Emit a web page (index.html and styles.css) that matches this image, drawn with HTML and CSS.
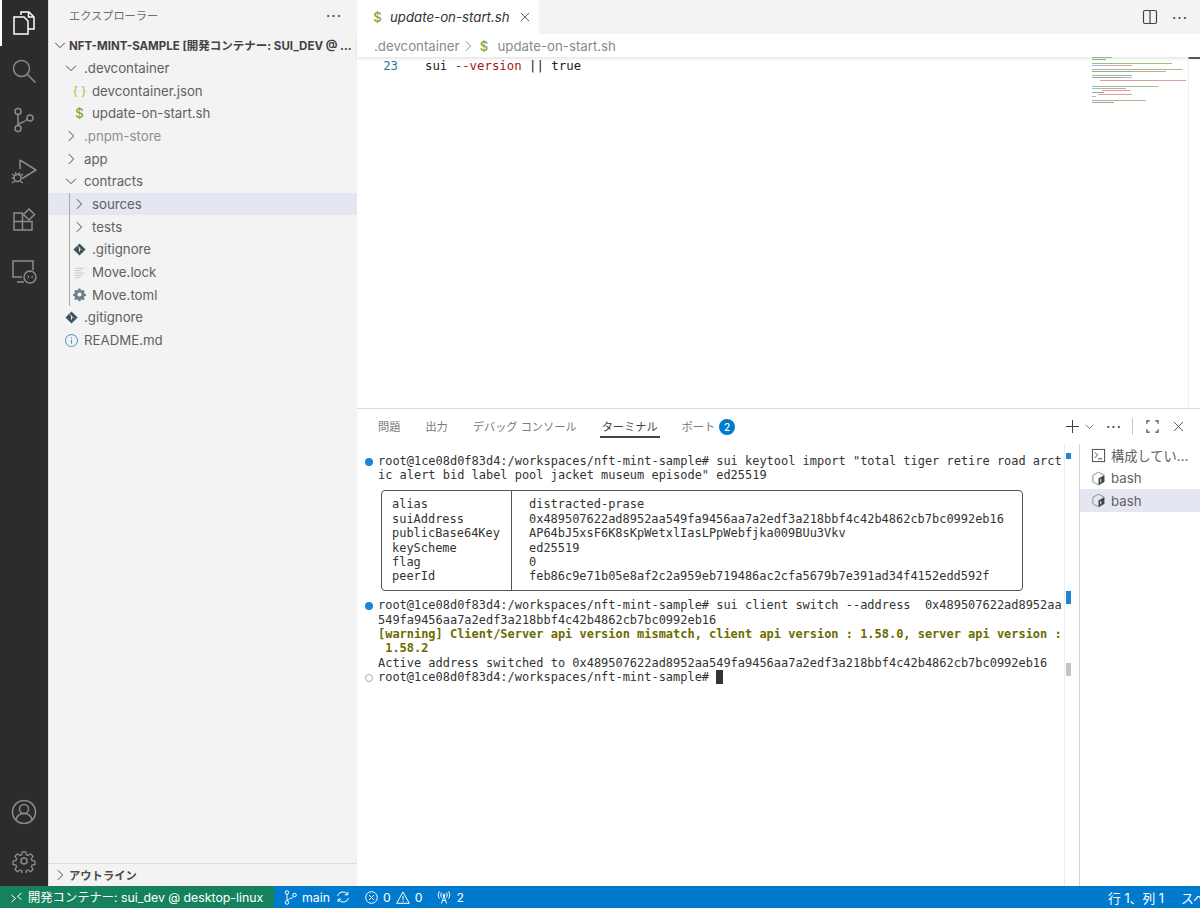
FILE: index.html
```html
<!DOCTYPE html>
<html lang="ja">
<head>
    <meta charset="UTF-8">
    <title>update-on-start.sh - nft-mint-sample</title>
    <link rel="stylesheet" href="styles.css">
</head>
<body>
    <svg class="sprite" width="0" height="0">
        <symbol id="chev-r" viewBox="0 0 16 16"><path d="M5.5 2.5 11 8l-5.5 5.5" fill="none" stroke="currentColor" stroke-width="1.1"/></symbol>
        <symbol id="chev-d" viewBox="0 0 16 16"><path d="M2.5 5.5 8 11l5.5-5.5" fill="none" stroke="currentColor" stroke-width="1.1"/></symbol>
        <symbol id="git-file" viewBox="0 0 16 16"><path d="M8 1.5 14.5 8 8 14.5 1.5 8z" fill="#41535b"/><path d="M6.3 4.6 8 6.3v4M8 6.6l2.2 2.2" fill="none" stroke="#f3f3f3" stroke-width="1"/></symbol>
        <symbol id="bash" viewBox="0 0 16 16"><path d="M8 1.2 14 4.5v7L8 14.8 2 11.5v-7z" fill="none" stroke="#7f8a90" stroke-width="1"/><path d="M8 8l6-3.5v7L8 14.8z" fill="#3d4448"/><path d="M10.4 8.5v3.5" stroke="#fff" stroke-width="1"/></symbol>
    </svg>

    <div class="workbench">
        <nav class="activity-bar">
            <div class="activity-top">
                <div class="activity-item active">
                    <svg width="24" height="26" viewBox="0 0 24 26" fill="none" stroke="#fff" stroke-width="1.5"><path d="M9 5V2h8l5 5v12h-6"/><path d="M2 7h10l4 4v13H2z"/><path d="M16.5 2v5h5"/></svg>
                </div>
                <div class="activity-item">
                    <svg width="26" height="26" viewBox="0 0 26 26" fill="none" stroke="#8c8c8c" stroke-width="1.5"><circle cx="10.5" cy="10.5" r="8"/><path d="m16 16 8.5 8.500"/></svg>
                </div>
                <div class="activity-item">
                    <svg width="22" height="26" viewBox="0 0 22 26" fill="none" stroke="#8c8c8c" stroke-width="1.5"><circle cx="5" cy="4.5" r="3"/><circle cx="5" cy="21.5" r="3"/><circle cx="17" cy="11" r="3"/><path d="M5 7.5v11M14 12c-2 4-6 2.5-9 6"/></svg>
                </div>
                <div class="activity-item item-debug">
                    <svg width="26" height="28" viewBox="0 0 26 28" fill="none" stroke="#8c8c8c" stroke-width="1.5"><path d="M9 2v9M9 2l16 10-13 8"/><circle cx="6.5" cy="20" r="3.5"/><path d="M1 16l3 2M1 20h2M1 25l3-2M12 16l-3 2M12 20h-2M12 25l-3-2M4 14.5l1.5 2M9 14.5l-1.5 2"/></svg>
                </div>
                <div class="activity-item">
                    <svg width="24" height="24" viewBox="0 0 24 24" fill="none" stroke="#8c8c8c" stroke-width="1.5"><path d="M2 5h8.5v8.5H2zM2 13.5h8.5V22H2zM10.5 13.5H20V22h-9.5z"/><path d="m17 1 5.500 5.500-5.500 5.500-5.500-5.500z"/></svg>
                </div>
                <div class="activity-item item-remote">
                    <svg width="26" height="26" viewBox="0 0 26 26" fill="none" stroke="#8c8c8c" stroke-width="1.5"><path d="M11 18H2V2h20v9"/><path d="M6 23h7"/><circle cx="19" cy="18" r="6" fill="#2c2c2c"/><path d="m16.5 16.5 1.5 1.5-1.5 1.5M22 16.5 20.5 18l1.5 1.5" stroke-width="1"/></svg>
                </div>
            </div>
            <div class="activity-bottom">
                <div class="activity-item">
                    <svg width="26" height="26" viewBox="0 0 26 26" fill="none" stroke="#8c8c8c" stroke-width="1.5"><circle cx="13" cy="13" r="11.5"/><circle cx="13" cy="10" r="4.5"/><path d="M5 21c1-5 4-6.5 8-6.5s7 1.5 8 6.5"/></svg>
                </div>
                <div class="activity-item">
                    <svg width="24" height="24" viewBox="0 0 24 24" fill="none" stroke="#8c8c8c" stroke-width="1.5"><circle cx="12" cy="12" r="3"/><path d="M10 1.5h4l.7 3.3 2 .9 2.900-1.900 2.700 2.800-1.900 2.800.9 2.100 3.200.6v3.800l-3.200.7-.9 2 1.900 2.900-2.700 2.700-2.900-1.900-2 .9-.7 3.300h-4l-.7-3.300-2-.9-2.900 1.900-2.700-2.700 1.900-2.900-.9-2-3.200-.7v-3.800l3.200-.6.9-2.100-1.900-2.800 2.700-2.800 2.900 1.900 2-.9z" transform="translate(1.5 1.5) scale(.875)"/></svg>
                </div>
            </div>
        </nav>

        <aside class="sidebar">
            <div class="sidebar-title">
                <span>エクスプローラー</span>
                <span class="dots">···</span>
            </div>
            <div class="tree">
                <div class="tree-root">
                    <svg class="chev"><use href="#chev-d"/></svg>
                    <span class="root-name">NFT-MINT-SAMPLE [開発コンテナー: SUI_DEV @ ...</span>
                </div>
                <div class="row d1"><svg class="chev"><use href="#chev-d"/></svg>.devcontainer</div>
                <div class="row d2"><span class="file-icon json">{ }</span>devcontainer.json</div>
                <div class="row d2"><span class="file-icon shell">$</span>update-on-start.sh</div>
                <div class="row d1 muted"><svg class="chev"><use href="#chev-r"/></svg>.pnpm-store</div>
                <div class="row d1"><svg class="chev"><use href="#chev-r"/></svg>app</div>
                <div class="row d1"><svg class="chev"><use href="#chev-d"/></svg>contracts</div>
                <div class="tree-group">
                    <div class="indent-guide"></div>
                    <div class="row d2 selected"><svg class="chev"><use href="#chev-r"/></svg>sources</div>
                    <div class="row d2"><svg class="chev"><use href="#chev-r"/></svg>tests</div>
                    <div class="row d2"><svg class="file-svg"><use href="#git-file"/></svg>.gitignore</div>
                    <div class="row d2">
                        <svg class="file-svg" viewBox="0 0 16 16" fill="none" stroke="#c4c4c4" stroke-width="1"><path d="M3 3.5h10M3 6h7M3 8.5h10M3 11h8M3 13.5h5"/></svg>Move.lock
                    </div>
                    <div class="row d2">
                        <svg class="file-svg" viewBox="0 0 16 16"><path d="M6.8 1.5h2.4l.4 1.8 1.3.6 1.6-1 1.7 1.7-1 1.6.6 1.3 1.8.4v2.4l-1.800.4-.6 1.300 1 1.600-1.700 1.700-1.600-1-1.300.6-.4 1.800H6.800l-.4-1.800-1.300-.6-1.600 1-1.700-1.700 1-1.600-.6-1.300-1.800-.4V7.900l1.800-.4.6-1.300-1-1.600 1.700-1.700 1.600 1 1.300-.6z" transform="translate(.8 .3) scale(.9)" fill="#6d8086"/><circle cx="8" cy="8" r="2.2" fill="#f3f3f3"/></svg>Move.toml
                    </div>
                </div>
                <div class="row d1"><svg class="file-svg"><use href="#git-file"/></svg>.gitignore</div>
                <div class="row d1">
                    <svg class="file-svg" viewBox="0 0 16 16" fill="none" stroke="#519aba" stroke-width="1.1"><circle cx="8" cy="8" r="6.4"/><path d="M8 7v4.5M8 4.3v1.4"/></svg>README.md
                </div>
            </div>
            <div class="outline">
                <svg class="chev"><use href="#chev-r"/></svg>
                <span>アウトライン</span>
            </div>
        </aside>

        <main class="main">
            <div class="tab-bar">
                <div class="tab">
                    <span class="file-icon shell">$</span>
                    <span class="tab-name">update-on-start.sh</span>
                    <svg class="tab-close" viewBox="0 0 16 16" fill="none" stroke="#424242" stroke-width="1.1"><path d="m2.5 2.5 11 11M13.5 2.5l-11 11"/></svg>
                </div>
                <div class="tab-actions">
                    <svg width="16" height="16" viewBox="0 0 16 16" fill="none" stroke="#424242" stroke-width="1.2"><rect x="1.5" y="1.5" width="13" height="13" rx="1.5"/><path d="M8 1.5v13"/></svg>
                    <span class="dots">···</span>
                </div>
            </div>
            <div class="breadcrumb">
                <span>.devcontainer</span>
                <svg class="crumb-sep"><use href="#chev-r"/></svg>
                <span class="file-icon shell">$</span>
                <span>update-on-start.sh</span>
            </div>
            <div class="editor">
                <div class="code">
                    <span class="line-no">23</span>
                    <span class="line-text">sui <span class="tok-flag">--version</span> || true</span>
                </div>
                <svg class="minimap" width="96" height="48" viewBox="0 0 96 48">
                    <g class="mini-green"><rect x="0" y="0" width="20" height="1"/><rect x="0" y="6" width="80" height="1"/><rect x="0" y="12" width="90" height="1"/><rect x="0" y="18" width="40" height="1"/><rect x="0" y="29" width="66" height="1"/><rect x="0" y="43" width="54" height="1"/></g>
                    <g class="mini-dark"><rect x="0" y="2" width="14" height="1"/><rect x="0" y="14" width="40" height="1"/><rect x="0" y="20" width="30" height="1"/><rect x="0" y="35" width="12" height="1"/><rect x="0" y="45" width="22" height="1"/></g>
                    <g class="mini-red"><rect x="14" y="8" width="26" height="1"/><rect x="40" y="14" width="34" height="1"/><rect x="8" y="23" width="86" height="1"/><rect x="8" y="31" width="26" height="1"/><rect x="10" y="33" width="28" height="1"/><rect x="6" y="37" width="34" height="1"/></g>
                    <g class="mini-blue"><rect x="0" y="8" width="14" height="1"/><rect x="30" y="20" width="10" height="1"/><rect x="0" y="31" width="8" height="1"/><rect x="0" y="39" width="4" height="1"/></g>
                </svg>
                <div class="editor-scroll"></div>
            </div>
            <section class="panel">
                <div class="panel-head">
                    <div class="panel-tabs">
                        <span>問題</span>
                        <span>出力</span>
                        <span>デバッグ コンソール</span>
                        <span class="current">ターミナル</span>
                        <span class="with-badge">ポート<b class="badge">2</b></span>
                    </div>
                    <div class="panel-actions">
                        <svg class="act-plus" viewBox="0 0 16 16" fill="none" stroke="#424242" stroke-width="1.1"><path d="M8 1v14M1 8h14"/></svg>
                        <svg class="act-caret"><use href="#chev-d"/></svg>
                        <span class="dots">···</span>
                        <span class="act-sep"></span>
                        <svg class="act-icon" viewBox="0 0 14 14" fill="none" stroke="#424242" stroke-width="1.2"><path d="M1 4V1h3M10 1h3v3M13 10v3h-3M4 13H1v-3"/></svg>
                        <svg class="act-icon" viewBox="0 0 16 16" fill="none" stroke="#424242" stroke-width="1.1"><path d="m2.5 2.5 11 11M13.5 2.5l-11 11"/></svg>
                    </div>
                </div>
                <div class="panel-body">
                    <div class="terminal">
                        <div class="term-line"><i class="mark ok"></i>root@1ce08d0f83d4:/workspaces/nft-mint-sample# sui keytool import "total tiger retire road arct</div>
                        <div class="term-line">ic alert bid label pool jacket museum episode" ed25519</div>
                        <div class="term-table">
                            <div class="term-keys">
                                <div class="term-line">alias</div>
                                <div class="term-line">suiAddress</div>
                                <div class="term-line">publicBase64Key</div>
                                <div class="term-line">keyScheme</div>
                                <div class="term-line">flag</div>
                                <div class="term-line">peerId</div>
                            </div>
                            <div class="term-values">
                                <div class="term-line">distracted-prase</div>
                                <div class="term-line">0x489507622ad8952aa549fa9456aa7a2edf3a218bbf4c42b4862cb7bc0992eb16</div>
                                <div class="term-line">AP64bJ5xsF6K8sKpWetxlIasLPpWebfjka009BUu3Vkv</div>
                                <div class="term-line">ed25519</div>
                                <div class="term-line">0</div>
                                <div class="term-line">feb86c9e71b05e8af2c2a959eb719486ac2cfa5679b7e391ad34f4152edd592f</div>
                            </div>
                        </div>
                        <div class="term-line"><i class="mark ok"></i>root@1ce08d0f83d4:/workspaces/nft-mint-sample# sui client switch --address  0x489507622ad8952aa</div>
                        <div class="term-line">549fa9456aa7a2edf3a218bbf4c42b4862cb7bc0992eb16</div>
                        <div class="term-line warn">[warning] Client/Server api version mismatch, client api version : 1.58.0, server api version :</div>
                        <div class="term-line warn"> 1.58.2</div>
                        <div class="term-line">Active address switched to 0x489507622ad8952aa549fa9456aa7a2edf3a218bbf4c42b4862cb7bc0992eb16</div>
                        <div class="term-line"><i class="mark idle"></i>root@1ce08d0f83d4:/workspaces/nft-mint-sample# <i class="cursor"></i></div>
                    </div>
                    <div class="term-ruler">
                        <i class="rule-a"></i>
                        <i class="rule-b"></i>
                        <i class="rule-c"></i>
                    </div>
                    <div class="term-list">
                        <div class="term-item">
                            <svg class="file-svg" viewBox="0 0 16 16" fill="none" stroke="#424242" stroke-width="1"><rect x="1.5" y="1.5" width="13" height="13"/><path d="m4 4.5 3 3-3 3M7.5 11.5H12"/></svg>
                            <span>構成してい...</span>
                        </div>
                        <div class="term-item"><svg class="file-svg"><use href="#bash"/></svg><span>bash</span></div>
                        <div class="term-item selected"><svg class="file-svg"><use href="#bash"/></svg><span>bash</span></div>
                    </div>
                </div>
            </section>
        </main>
    </div>

    <footer class="status-bar">
        <div class="status-remote">
            <svg width="11" height="11" viewBox="0 0 11 11" fill="none" stroke="#fff" stroke-width="1"><path d="m.5 3 4 3.5-4 3.500M10.500 1l-4 3.500 4 3"/></svg>
            <span>開発コンテナー: sui_dev @ desktop-linux</span>
        </div>
        <div class="status-left">
            <span class="status-item">
                <svg width="13" height="15" viewBox="0 0 13 15" fill="none" stroke="#fff" stroke-width="1"><circle cx="3" cy="2.5" r="1.8"/><circle cx="3" cy="12.5" r="1.8"/><circle cx="10.5" cy="5" r="1.8"/><path d="M3 4.3v6.4M9.5 6.5C8.5 9 4.5 8 3 10.7"/></svg>
                main
                <svg class="sync" width="14" height="14" viewBox="0 0 14 14" fill="none" stroke="#fff" stroke-width="1"><path d="M1.5 6A5.5 5.5 0 0 1 11.5 4.5M12.5 8A5.5 5.5 0 0 1 2.5 9.5"/><path d="M11.8 1.8v3h-3M2.2 12.2v-3h3"/></svg>
            </span>
            <span class="status-item problems">
                <svg width="13" height="13" viewBox="0 0 13 13" fill="none" stroke="#fff" stroke-width="1"><circle cx="6.5" cy="6.5" r="5.8"/><path d="m4 4 5 5M9 4 4 9"/></svg>
                0
                <svg class="warn-icon" width="14" height="13" viewBox="0 0 14 13" fill="none" stroke="#fff" stroke-width="1"><path d="M7 1 13.3 12.3H.7z"/><path d="M7 5v4M7 10v1.2"/></svg>
                0
            </span>
            <span class="status-item">
                <svg width="14" height="13" viewBox="0 0 14 13" fill="none" stroke="#fff" stroke-width="1"><path d="M7 4.5 4.5 12.5M7 4.5l2.5 8M5.3 9.5h3.4"/><circle cx="7" cy="4" r="1"/><path d="M4.5 1.5C3.5 3 3.5 5 4.5 6.5M9.5 1.5c1 1.5 1 3.5 0 5M2.5.5C.8 2.5.8 5.5 2.5 7.5M11.5.5c1.700 2 1.700 5 0 7"/></svg>
                2
            </span>
        </div>
        <div class="status-right">
            <span>行 1、列 1</span>
            <span>スペ</span>
        </div>
    </footer>
</body>
</html>
```

FILE: styles.css
```css
* {
    box-sizing: border-box;
}
html, body {
    height: 100%;
}
body {
    margin: 0;
    overflow: hidden;
    font-family: Inter, "Noto Sans CJK JP", sans-serif;
    font-size: 13.25px;
    color: #616161;
    background-color: #fff;
}
.sprite {
    display: block;
    height: 0;
}
.workbench {
    display: flex;
    height: 886px;
}

/* activity bar */
.activity-bar {
    width: 49px;
    flex: none;
    display: flex;
    flex-direction: column;
    justify-content: space-between;
    background-color: #2c2c2c;
    border-right: 1px solid #d8d8d8;
}
.activity-item {
    height: 49.6px;
    display: flex;
    align-items: center;
    justify-content: center;
    padding-right: 1px;
}
.activity-item.active {
    border-left: 2px solid #fff;
    padding-right: 3px;
    height: 46px;
}
.item-debug {
    padding-top: 5px;
}
.item-remote {
    padding-top: 5px;
}

/* explorer */
.sidebar {
    width: 308px;
    flex: none;
    display: flex;
    flex-direction: column;
    background-color: #f3f3f3;
}
.sidebar-title {
    height: 33px;
    flex: none;
    display: flex;
    align-items: center;
    justify-content: space-between;
    padding: 0 15px 3px 20px;
    font-size: 11.2px;
    color: #6f6f6f;
}
.dots {
    font-size: 15px;
    font-weight: 400;
    letter-spacing: 1px;
    color: #424242;
}
.tree {
    flex: 1;
    min-height: 0;
}
.tree-root {
    height: 23.5px;
    display: flex;
    align-items: center;
    padding-left: 4px;
    font-size: 11.5px;
    font-weight: 700;
    color: #424242;
}
.root-name {
    margin-left: 2px;
    white-space: nowrap;
}
.tree-root .chev {
    margin-right: 0;
}
.row {
    height: 22.7px;
    display: flex;
    align-items: center;
    white-space: nowrap;
}
.row.d1 {
    padding-left: 15px;
}
.row.d2 {
    padding-left: 23px;
}
.row.muted {
    color: #8e8e8e;
}
.row.selected,
.term-item.selected {
    background-color: #e4e6f1;
}
.chev {
    width: 14px;
    height: 14px;
    flex: none;
    color: #424242;
    margin-right: 6px;
}
.row .file-icon,
.row .file-svg {
    margin-right: 5px;
}
.file-icon {
    width: 15px;
    flex: none;
    text-align: center;
    font-weight: 500;
}
.file-icon.json {
    font-size: 12px;
    font-weight: 400;
    color: #b7b73b;
}
.file-icon.shell {
    color: #7fa832;
}
.file-svg {
    width: 15px;
    height: 15px;
    flex: none;
}
.tree-group {
    position: relative;
}
.indent-guide {
    position: absolute;
    left: 20px;
    top: 0;
    bottom: 0;
    width: 1px;
    background-color: #a9a9a9;
    z-index: 1;
}
.outline {
    height: 23px;
    flex: none;
    display: flex;
    align-items: center;
    padding-left: 4px;
    border-top: 1px solid #dcdcdc;
    font-size: 11.3px;
    font-weight: 700;
    color: #4d4d4d;
}
.outline .chev {
    margin-right: 2px;
}

/* editor */
.main {
    flex: 1;
    min-width: 0;
    display: flex;
    flex-direction: column;
}
.tab-bar {
    height: 34px;
    flex: none;
    display: flex;
    justify-content: space-between;
    background-color: #f3f3f3;
}
.tab {
    width: 182px;
    display: flex;
    align-items: center;
    padding-left: 13px;
    background-color: #fff;
    color: #333;
}
.tab .file-icon {
    margin-right: 5px;
}
.tab-name {
    font-style: italic;
}
.tab-close {
    width: 12px;
    height: 12px;
    margin-left: 9px;
}
.tab-actions {
    display: flex;
    align-items: center;
    gap: 14px;
    padding-right: 12px;
}
.breadcrumb {
    height: 23px;
    flex: none;
    display: flex;
    align-items: center;
    padding-left: 17px;
    color: #8a8a8a;
    box-shadow: 0 2px 3px rgba(0, 0, 0, 0.1);
    position: relative;
}
.breadcrumb .file-icon {
    margin-right: 6px;
}
.crumb-sep {
    width: 14px;
    height: 14px;
    color: #8a8a8a;
    margin: 0 2px 0 1px;
}
.editor {
    flex: 1;
    min-height: 0;
    display: flex;
    font-family: "DejaVu Sans Mono", monospace;
    font-size: 12.35px;
    color: #222;
}
.code {
    flex: 1;
    display: flex;
    height: 18px;
    line-height: 18px;
}
.line-no {
    width: 41px;
    flex: none;
    text-align: right;
    color: #237893;
}
.line-text {
    margin-left: 27px;
    white-space: pre;
}
.tok-flag {
    color: #a31515;
}
.minimap {
    flex: none;
    opacity: 0.8;
}
.mini-green {
    fill: #7cb36a;
}
.mini-dark {
    fill: #8a8a8a;
}
.mini-red {
    fill: #cf8a86;
}
.mini-blue {
    fill: #8fa6d6;
}
.editor-scroll {
    width: 12px;
    flex: none;
    border-left: 1px solid #efefef;
    border-top: 2px solid #555;
    height: 100%;
    position: relative;
    z-index: 1;
}

/* panel */
.panel {
    height: 478px;
    flex: none;
    display: flex;
    flex-direction: column;
    border-top: 1px solid #dcdcdc;
}
.panel-head {
    height: 35px;
    flex: none;
    display: flex;
    justify-content: space-between;
    align-items: center;
}
.panel-tabs {
    display: flex;
    align-items: center;
    gap: 25px;
    padding-left: 21px;
    font-size: 11.2px;
    color: #7a7a7a;
}
.panel-tabs span {
    height: 21px;
    line-height: 20px;
    padding-top: 1px;
}
.panel-tabs .current {
    color: #424242;
    border-bottom: 1px solid #424242;
    box-shadow: 0 1px 0 #424242;
    margin: 0 -3px 0 -2px;
    padding: 1px 2px 0;
}
.with-badge {
    display: flex;
    align-items: center;
}
.badge {
    width: 16px;
    height: 16px;
    margin-left: 4px;
    border-radius: 50%;
    background-color: #007acc;
    color: #fff;
    font-size: 10px;
    font-weight: 500;
    line-height: 16px;
    text-align: center;
}
.panel-actions {
    display: flex;
    align-items: center;
    padding-right: 15px;
    color: #424242;
}
.act-plus {
    width: 15px;
    height: 15px;
}
.act-caret {
    width: 11px;
    height: 11px;
    margin-left: 4px;
    color: #555;
}
.panel-actions .dots {
    margin-left: 11px;
}
.act-sep {
    width: 1px;
    height: 17px;
    margin: 0 13px 0 10px;
    background-color: #c8c8c8;
}
.act-icon {
    width: 13px;
    height: 13px;
}
.act-icon + .act-icon {
    margin-left: 13px;
}
.panel-body {
    flex: 1;
    min-height: 0;
    display: flex;
}
.terminal {
    width: 707px;
    flex: none;
    padding: 10px 0 0 21px;
    font-family: "DejaVu Sans Mono", monospace;
    font-size: 11.96px;
    color: #333;
}
.term-line {
    position: relative;
    height: 14.4px;
    line-height: 14.4px;
    white-space: pre;
}
.term-line.warn {
    color: #6b6b00;
    font-weight: 700;
}
.mark {
    position: absolute;
    left: -13px;
    top: 3.5px;
    width: 8px;
    height: 8px;
    border-radius: 50%;
}
.mark.ok {
    background-color: #1a85d6;
}
.mark.idle {
    border: 1px solid #aaa;
}
.cursor {
    display: inline-block;
    width: 7px;
    height: 14px;
    vertical-align: top;
    background-color: #333;
}
.term-table {
    width: 642px;
    height: 101px;
    margin: 7.2px 0 7.2px 3px;
    display: flex;
    border: 1px solid #555;
    border-radius: 4px;
    padding-top: 6.4px;
}
.term-keys {
    width: 130px;
    flex: none;
    padding-left: 10px;
    margin-top: -6.4px;
    padding-top: 6.4px;
    border-right: 1px solid #555;
}
.term-values {
    padding-left: 17px;
}
.term-ruler {
    width: 15px;
    flex: none;
    position: relative;
    border-left: 1px solid #ececec;
}
.term-ruler i {
    position: absolute;
    left: 1px;
    width: 5px;
}
.rule-a {
    top: 9px;
    height: 6px;
    background-color: #1a85d6;
}
.rule-b {
    top: 147px;
    height: 13px;
    background-color: #1a85d6;
}
.rule-c {
    top: 219px;
    height: 13px;
    background-color: #c4c4c4;
}
.term-list {
    flex: 1;
    min-width: 0;
    border-left: 1px solid #d4d4d4;
}
.term-item {
    height: 22.7px;
    display: flex;
    align-items: center;
    gap: 5px;
    padding-left: 11px;
    white-space: nowrap;
}

/* status bar */
.status-bar {
    height: 22px;
    display: flex;
    align-items: center;
    background-color: #007acc;
    color: #fff;
    font-size: 12.3px;
    white-space: nowrap;
}
.status-remote {
    width: 274px;
    height: 100%;
    flex: none;
    display: flex;
    align-items: center;
    gap: 6px;
    padding-left: 11px;
    background-color: #16825d;
}
.status-left {
    display: flex;
    align-items: center;
    gap: 15px;
    padding-left: 10px;
    flex: 1;
}
.status-item {
    display: flex;
    align-items: center;
    gap: 5px;
}
.status-item .sync {
    margin-left: 1px;
}
.status-right {
    display: flex;
    gap: 17px;
    width: 92px;
    flex: none;
    overflow: hidden;
    font-size: 12.8px;
}
```
